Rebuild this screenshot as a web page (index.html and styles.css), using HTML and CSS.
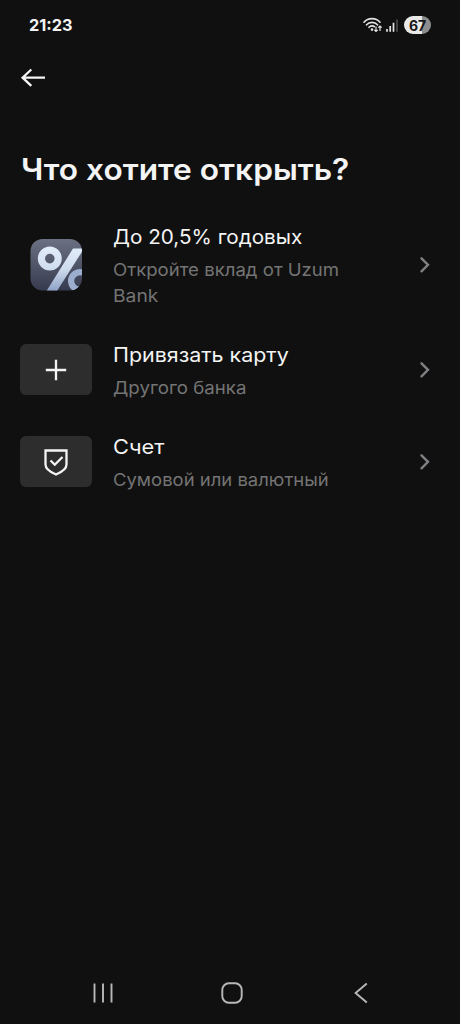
FILE: index.html
```html
<!DOCTYPE html>
<html lang="ru">
<head>
<meta charset="utf-8">
<title>Что хотите открыть?</title>
<link rel="stylesheet" href="styles.css">
</head>
<body>
<div class="screen">
  <header class="status">
    <span class="clock">21:23</span>
    <div class="indicators">
      <svg class="signals" width="36" height="18" viewBox="0 0 36 18" fill="none">
        <g stroke="#e4e4e4" stroke-width="1.6" stroke-linecap="round">
          <path d="M1 6.200C5.200 1.400 12.800 1.400 17 6.200"/>
          <path d="M3.500 8.800C6.500 5.500 11.500 5.500 14.500 8.800"/>
          <path d="M6 11.300C7.700 9.500 10.200 9.500 11.300 10.600"/>
        </g>
        <circle cx="9" cy="13.600" r="1.300" fill="#e4e4e4"/>
        <path d="M13 10.500V15.500M11.300 13.800L13 15.500L14.700 13.800M17 15V10M15.300 11.700L17 10L18.700 11.700" stroke="#e4e4e4" stroke-width="1.200"/>
        <path d="M24 13V15.700M27.200 10V15.700M30.500 6.800V15.700" stroke="#e4e4e4" stroke-width="1.700"/>
        <path d="M34 3.500V15.700" stroke="#555" stroke-width="1.500"/>
      </svg>
      <span class="battery">67</span>
    </div>
  </header>
  <nav class="topbar">
    <svg width="26" height="22" viewBox="0 0 26 22" fill="none" stroke="#f4f4f4" stroke-width="2.300"><path d="M25 10.700H2.500M11.300 2.500L2.600 10.700L11.300 18.900"/></svg>
  </nav>
  <main>
    <h1><span class="fit heading">Что хотите открыть?</span></h1>
    <a class="row row-deposit">
      <svg class="promo" width="52" height="52" viewBox="0 0 52 52">
        <defs>
          <linearGradient id="tile" x1="0" y1="0" x2="0" y2="1"><stop stop-color="#6b7082"/><stop offset="1" stop-color="#363a4e"/></linearGradient>
          <linearGradient id="mark" x1="0" y1="8" x2="0" y2="52" gradientUnits="userSpaceOnUse"><stop stop-color="#e2edf9"/><stop offset=".5" stop-color="#cfdced"/><stop offset="1" stop-color="#8ea2c6"/></linearGradient>
          <clipPath id="round"><rect x=".5" width="51.500" height="51.500" rx="12"/></clipPath>
        </defs>
        <g clip-path="url(#round)">
          <rect width="52" height="52" fill="url(#tile)"/>
          <path d="M43 9.500H54L27 52H16.500Z" fill="url(#mark)"/>
          <circle cx="19.800" cy="19.600" r="8.400" fill="none" stroke="url(#mark)" stroke-width="7.200"/>
          <circle cx="50" cy="42" r="8.900" fill="none" stroke="#9caecd" stroke-width="6.200"/>
        </g>
      </svg>
      <div class="copy">
        <div class="title"><span class="fit t1">До 20,5% годовых</span></div>
        <div class="sub"><span class="fit s1">Откройте вклад от Uzum</span><br><span class="fit s2">Bank</span></div>
      </div>
      <svg class="chevron" width="12" height="18" viewBox="0 0 12 18"><path d="M2.500 2.300L9 8.800L2.500 15.300"/></svg>
    </a>
    <a class="row row-card">
      <div class="tile"><svg width="28" height="28" viewBox="0 0 28 28" fill="none" stroke="#f4f4f4" stroke-width="2.300"><path d="M14 3.800V24.200M3.800 14H24.200"/></svg></div>
      <div class="copy">
        <div class="title"><span class="fit t2">Привязать карту</span></div>
        <div class="sub"><span class="fit s3">Другого банка</span></div>
      </div>
      <svg class="chevron" width="12" height="18" viewBox="0 0 12 18"><path d="M2.500 2.300L9 8.800L2.500 15.300"/></svg>
    </a>
    <a class="row row-account">
      <div class="tile"><svg width="28" height="28" viewBox="0 0 28 28" fill="none" stroke="#f4f4f4" stroke-width="2.300"><path d="M3.500 2.500H24.500V16.500C24.500 21 19.500 24.200 14 26.500C8.500 24.200 3.500 21 3.500 16.500Z"/><path d="M8.500 12.500L12.800 16.700L20.500 9"/></svg></div>
      <div class="copy">
        <div class="title"><span class="fit t3">Счет</span></div>
        <div class="sub"><span class="fit s4">Сумовой или валютный</span></div>
      </div>
      <svg class="chevron" width="12" height="18" viewBox="0 0 12 18"><path d="M2.500 2.300L9 8.800L2.500 15.300"/></svg>
    </a>
  </main>
  <footer class="system-nav">
    <svg width="20" height="22" viewBox="0 0 20 22"><path d="M1.500 1.500V20.500M10 1.500V20.500M18.500 1.500V20.500"/></svg>
    <svg class="home" width="22" height="22" viewBox="0 0 22 22"><rect x="1.300" y="1.300" width="19.400" height="19.400" rx="6.500"/></svg>
    <svg width="14" height="22" viewBox="0 0 14 22"><path d="M12.800 1.500L1.600 11L12.800 20.500"/></svg>
  </footer>
</div>
</body>
</html>
```
FILE: styles.css
```css
* { box-sizing: border-box; }
body { margin: 0; background: #101010; color: #f4f4f4; font-family: Inter, "Noto Sans", sans-serif; }
svg { display: block; flex: none; }
.screen { width: 460px; height: 1024px; display: flex; flex-direction: column; background: #101010; overflow: hidden; }
.status { height: 50px; padding: 0 29px; display: flex; align-items: center; justify-content: space-between; }
.clock { font-size: 16.300px; font-weight: 700; line-height: 20px; }
.indicators { display: flex; align-items: center; gap: 5px; }
.battery { width: 27px; height: 18px; border-radius: 9px; background: linear-gradient(90deg, #e9e9e9 67%, #8d8d8d 67%); color: #161616; font-size: 14px; font-weight: 700; line-height: 19px; text-align: center; }
.topbar { height: 56px; padding: 0 20px; display: flex; align-items: center; }
h1 { margin: 44px 21px 0; font-size: 29.500px; font-weight: 600; line-height: 38px; }
.fit { display: inline-block; white-space: nowrap; transform-origin: left; }
.heading { transform: scaleX(1.074); }
.t1 { transform: scaleX(1.034); }
.t2 { transform: scaleX(1.071); }
.t3 { transform: scaleX(1.090); }
.s1 { transform: scaleX(1.062); }
.s2 { transform: scaleX(1.100); }
.s3 { transform: scaleX(1.068); }
.s4 { transform: scaleX(1.055); }
.row { display: flex; align-items: center; padding: 0 29px 0 20px; }
.row-deposit { margin-top: 36px; height: 82px; }
.row-card { margin-top: 36px; height: 56px; }
.row-account { margin-top: 36px; height: 56px; }
.promo { margin: 0 31px 0 10px; }
.tile { width: 72px; height: 51px; margin: 0 20.600px 1px 0; border-radius: 6px; background: #2d2d2d; display: flex; align-items: center; justify-content: center; }
.copy { flex: 1; padding-top: 2px; }
.title { font-size: 20px; line-height: 28px; font-weight: 400; }
.sub { margin-top: 6px; font-size: 17.500px; line-height: 26px; color: #747474; }
.sub .fit { vertical-align: top; }
.chevron { fill: none; stroke: #808084; stroke-width: 2.400; stroke-linecap: round; }
.system-nav { margin-top: auto; height: 62px; padding: 0 92px 0 93px; display: flex; align-items: center; justify-content: space-between; }
.home { margin-right: 4px; }
.system-nav svg { fill: none; stroke: #b8b8b8; stroke-width: 1.900; }
```
